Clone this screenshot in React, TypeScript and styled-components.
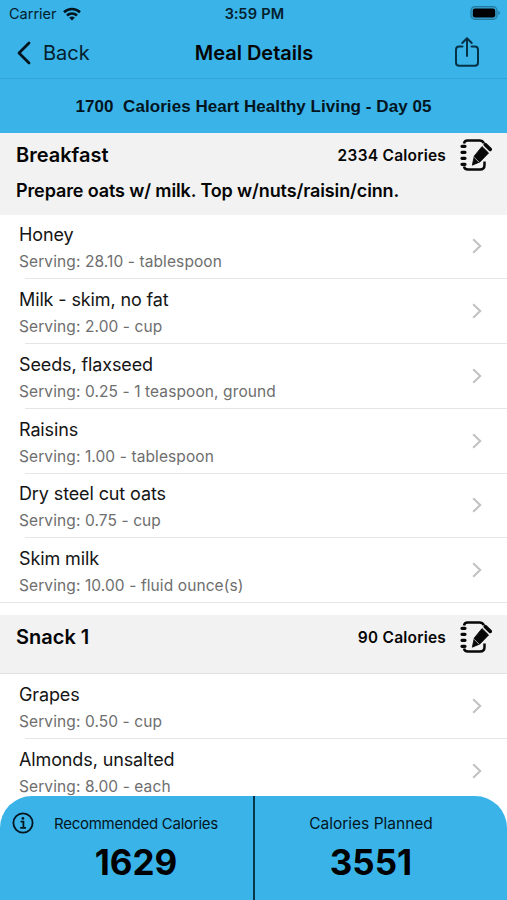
import React from 'react';
import styled, { createGlobalStyle } from 'styled-components';

const GlobalStyle = createGlobalStyle`
  * { box-sizing: border-box; }
  body { margin: 0; background: #fff; }
`;

const blue = '#39b3e8';

const Screen = styled.div`
  width: 507px;
  height: 900px;
  display: flex;
  flex-direction: column;
  overflow: hidden;
  background: #fff;
  color: #050505;
  font-family: Inter, 'Liberation Sans', sans-serif;
  font-feature-settings: 'calt' 0;
`;

interface LabelProps {
  $size: number;
  $weight?: number;
  $spacing?: number;
  $color?: string;
}

const Label = styled.span<LabelProps>`
  display: block;
  margin: 0;
  white-space: pre;
  font-size: ${(p) => p.$size}px;
  font-weight: ${(p) => p.$weight ?? 400};
  letter-spacing: ${(p) => p.$spacing ?? 0}px;
  color: ${(p) => p.$color ?? 'inherit'};
`;

const Figures = styled(Label)`
  font-variant-numeric: tabular-nums;
`;

const StatusBar = styled.div`
  flex: none;
  height: 27px;
  display: grid;
  grid-template-columns: 1fr auto 1fr;
  align-items: center;
  padding: 0 7px 0 9px;
  background: ${blue};
  color: #04202d;
`;

const Carrier = styled.div`
  display: flex;
  align-items: center;
  gap: 6px;
`;

const BatterySlot = styled.div`
  display: flex;
  justify-content: flex-end;
  padding-bottom: 1px;
`;

const NavBar = styled.nav`
  flex: none;
  height: 52px;
  display: grid;
  grid-template-columns: 1fr auto 1fr;
  align-items: center;
  padding: 0 15px 0 16px;
  background: ${blue};
  border-bottom: 1px solid #30a4d7;
`;

const BackButton = styled.button`
  display: flex;
  align-items: center;
  gap: 11px;
  padding: 0;
  border: 0;
  background: none;
  color: #04202d;
  font-family: inherit;
`;

const ShareButton = styled.button`
  justify-self: end;
  display: flex;
  margin: 0 12px 2px 0;
  padding: 0;
  border: 0;
  background: none;
`;

const Banner = styled.h1`
  flex: none;
  height: 53.6px;
  margin: 0;
  padding-top: 2px;
  display: flex;
  align-items: center;
  justify-content: center;
  background: ${blue};
  color: #03151e;
  white-space: pre;
  font: 700 17px 'Liberation Sans', Arial, sans-serif;
  letter-spacing: 0.06px;
`;

const MealList = styled.main`
  flex: 1;
  min-height: 0;
  overflow: hidden;
`;

const MealHeader = styled.header<{ $height: number; $ruled?: boolean }>`
  height: ${(p) => p.$height}px;
  padding: 4px 15px 0 16px;
  background: #f2f2f2;
  border-bottom: ${(p) => (p.$ruled ? '1px solid #e2e2e2' : '0')};
`;

const MealTitleRow = styled.div`
  height: 37px;
  display: flex;
  align-items: center;
`;

const MealEnergy = styled.div`
  margin-left: auto;
  display: flex;
  align-items: center;
  gap: 14px;
`;

const MealNote = styled.div`
  height: 34px;
  display: flex;
  align-items: center;
`;

const FoodRow = styled.div`
  height: 64.75px;
  display: flex;
  align-items: center;
  justify-content: space-between;
  padding: 0 24px 1px 19px;
`;

const FoodText = styled.div`
  display: flex;
  flex-direction: column;
  gap: 5px;
  padding-top: 5px;
  line-height: 22px;
`;

const Divider = styled.div<{ $full?: boolean }>`
  height: 1px;
  margin: -1px 0 0 ${(p) => (p.$full ? 0 : 25)}px;
  background: #e6e6e6;
`;

const SectionGap = styled.div`
  height: 11.5px;
`;

const Footer = styled.footer`
  flex: none;
  height: 104px;
  margin-top: -104px;
  position: relative;
  display: grid;
  grid-template-columns: 253px 2px 1fr;
  border-radius: 32px 32px 0 0;
  background: ${blue};
  color: #03151e;
`;

const FooterRule = styled.div`
  background: #08374c;
`;

const Total = styled.div`
  display: flex;
  flex-direction: column;
  align-items: center;
  padding: 17px 20px 0 0;
`;

const RecommendedTotal = styled.div`
  display: grid;
  grid-template-columns: 22px 1fr;
  column-gap: 14px;
  padding: 16px 29px 0 12px;
`;

const RecommendedText = styled.div`
  display: flex;
  flex-direction: column;
  align-items: center;
  padding-top: 1px;
`;

const FooterCaption = styled(Label)`
  line-height: 22px;
`;

const FooterValue = styled(Label)`
  margin-top: 5px;
  line-height: 44px;
  color: #000;
`;

const WifiIcon = () => (
  <svg width="18" height="14" viewBox="0 0 18 14" fill="none" stroke="#03151e" strokeWidth="2.6">
    <path d="M1 5.2a11.5 11.5 0 0 1 16 0" />
    <path d="M4 8.5a7.2 7.2 0 0 1 10 0" />
    <path d="M6.2 10.8a4 4 0 0 1 5.6 0L9 13.6z" fill="#03151e" stroke="none" />
  </svg>
);

const BatteryIcon = () => (
  <svg width="30" height="14" viewBox="0 0 30 14">
    <rect x="1" y=".7" width="26" height="12.6" rx="3.8" fill="#39a5d3" stroke="#237a9e" strokeWidth="1.2" />
    <rect x="2.8" y="2.5" width="22.4" height="9" rx="2.2" fill="#000" />
    <path d="M28.4 4.8v4.4q1.5-.7 1.5-2.2t-1.5-2.2z" fill="#237a9e" />
  </svg>
);

const BackIcon = () => (
  <svg width="16" height="24" viewBox="0 0 16 24" fill="none" stroke="#02131b" strokeWidth="2.8" strokeLinecap="round" strokeLinejoin="round">
    <path d="M13 2 3 12l10 10" />
  </svg>
);

const ShareIcon = () => (
  <svg width="26" height="32" viewBox="0 0 26 32" fill="none" stroke="#063247" strokeWidth="2" strokeLinecap="round" strokeLinejoin="round">
    <path d="M8.5 10.5H5.2Q2 10.5 2 13.7V26.5Q2 29.8 5.2 29.8H20.8Q24 29.8 24 26.5V13.7Q24 10.5 20.8 10.5H17.5" />
    <path d="M13 20V2.500M8.300 7 13 2.300 17.700 7" />
  </svg>
);

const ChevronIcon = () => (
  <svg width="12" height="16" viewBox="0 0 12 16" fill="none" stroke="#c2c2c4" strokeWidth="2.1">
    <path d="m2.200 1.200 7 6.800-7 6.800" />
  </svg>
);

const EditIcon = () => (
  <svg width="32" height="32" viewBox="0 0 32 32" fill="none" stroke="#080808">
    <path d="M4 4.500Q4.500 1.500 7.500 1.500H19.500Q22.500 1.500 24 4.200M24.500 22.500V26Q24.500 30.500 20 30.500H8Q4.500 30.500 4 27.500" strokeWidth="2.5" />
    <path d="M2 7.300H5M2 13.300H5M2 19.300H5M2 25.300H5" strokeWidth="3.2" strokeLinecap="round" />
    <path d="M22 7.500 28.600 14 20 22.900 12.300 26.200 14.300 16.900z" fill="#080808" stroke="#080808" strokeWidth=".8" strokeLinejoin="round" />
    <path d="m14.200 18.300 4.800 4.900" stroke="#f2f2f2" strokeWidth=".7" />
    <path d="m25.300 5.600 4.900 4.800" strokeWidth="3.6" strokeLinecap="round" />
  </svg>
);

const InfoIcon = () => (
  <svg width="22" height="22" viewBox="0 0 22 22" fill="none" stroke="#03151e" strokeWidth="1.8">
    <circle cx="11" cy="11" r="9.6" />
    <circle cx="10.900" cy="6.400" r="1.400" fill="#03151e" stroke="none" />
    <path d="M8.600 9.700H11.400V15.700M8.200 15.900H14" />
  </svg>
);

interface Food {
  name: string;
  serving: string;
}

const breakfast: Food[] = [
  { name: 'Honey', serving: '28.10 - tablespoon' },
  { name: 'Milk - skim, no fat', serving: '2.00 - cup' },
  { name: 'Seeds, flaxseed', serving: '0.25 - 1 teaspoon, ground' },
  { name: 'Raisins', serving: '1.00 - tablespoon' },
  { name: 'Dry steel cut oats', serving: '0.75 - cup' },
  { name: 'Skim milk', serving: '10.00 - fluid ounce(s)' },
];

const snack: Food[] = [
  { name: 'Grapes', serving: '0.50 - cup' },
  { name: 'Almonds, unsalted', serving: '8.00 - each' },
];

const FoodItems = ({ foods, closed }: { foods: Food[]; closed?: boolean }) => (
  <>
    {foods.map((food, index) => {
      const last = index === foods.length - 1;
      return (
        <React.Fragment key={food.name}>
          <FoodRow>
            <FoodText>
              <Label $size={18} $spacing={-0.12} $color="#151515">{food.name}</Label>
              <Label $size={15.5} $spacing={0.1} $color="#6e6e6e">{`Serving: ${food.serving}`}</Label>
            </FoodText>
            <ChevronIcon />
          </FoodRow>
          {(!last || closed) && <Divider $full={last} />}
        </React.Fragment>
      );
    })}
  </>
);

const MealHeading = ({ title, calories }: { title: string; calories: number }) => (
  <MealTitleRow>
    <Label as="h2" $size={20} $weight={600}>{title}</Label>
    <MealEnergy>
      <Figures $size={15.5} $weight={600} $spacing={0.2}>{`${calories} Calories`}</Figures>
      <EditIcon />
    </MealEnergy>
  </MealTitleRow>
);

export default function App() {
  return (
    <Screen>
      <GlobalStyle />
      <StatusBar>
        <Carrier>
          <Label $size={14.5}>Carrier</Label>
          <WifiIcon />
        </Carrier>
        <Figures $size={14.5} $weight={600} $spacing={0.1}>3:59 PM</Figures>
        <BatterySlot><BatteryIcon /></BatterySlot>
      </StatusBar>
      <NavBar>
        <BackButton>
          <BackIcon />
          <Label $size={20}>Back</Label>
        </BackButton>
        <Label $size={20} $weight={600}>Meal Details</Label>
        <ShareButton aria-label="Share"><ShareIcon /></ShareButton>
      </NavBar>
      <Banner>{'1700  Calories Heart Healthy Living - Day 05'}</Banner>
      <MealList>
        <MealHeader $height={82}>
          <MealHeading title="Breakfast" calories={2334} />
          <MealNote>
            <Label $size={18} $weight={600} $spacing={-0.12}>Prepare oats w/ milk. Top w/nuts/raisin/cinn.</Label>
          </MealNote>
        </MealHeader>
        <FoodItems foods={breakfast} closed />
        <SectionGap />
        <MealHeader $height={59.5} $ruled>
          <MealHeading title="Snack 1" calories={90} />
        </MealHeader>
        <FoodItems foods={snack} />
      </MealList>
      <Footer>
        <RecommendedTotal>
          <InfoIcon />
          <RecommendedText>
            <FooterCaption $size={15} $spacing={-0.26}>Recommended Calories</FooterCaption>
            <FooterValue $size={35} $weight={700}>1629</FooterValue>
          </RecommendedText>
        </RecommendedTotal>
        <FooterRule />
        <Total>
          <FooterCaption $size={15.5}>Calories Planned</FooterCaption>
          <FooterValue $size={35} $weight={700}>3551</FooterValue>
        </Total>
      </Footer>
    </Screen>
  );
}
